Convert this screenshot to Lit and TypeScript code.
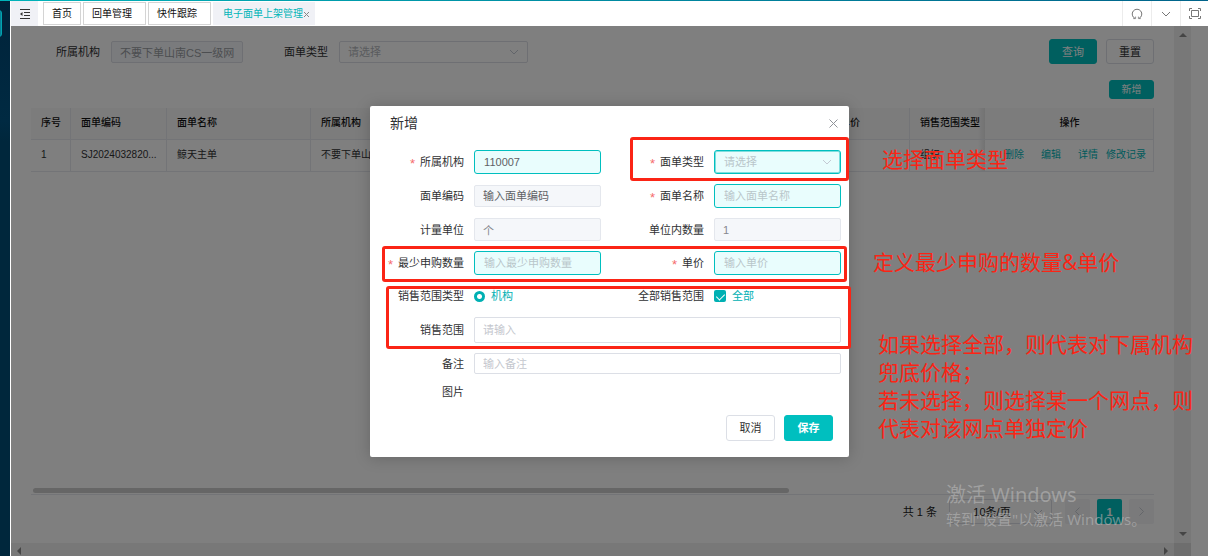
import { LitElement, html, css, svg, nothing } from "lit";
import { customElement } from "lit/decorators.js";
import { classMap } from "lit/directives/class-map.js";

const chevron = svg`<path d="M1 1 L5 5 L9 1" fill="none" stroke="currentColor" stroke-width="1" />`;

const controls = css`
  :host {
    font-family: "Liberation Sans", "Noto Sans CJK SC", sans-serif;
    font-size: 11px;
    line-height: 16px;
    color: #303133;
  }
  * {
    box-sizing: border-box;
  }
  button,
  input,
  select {
    font: inherit;
    color: inherit;
    margin: 0;
  }
  .field,
  .picker select {
    width: 100%;
    height: 22px;
    padding: 0 8px;
    border: 1px solid #dcdfe6;
    border-radius: 2px;
    background: #fff;
    color: #606266;
    outline: none;
  }
  .field::placeholder {
    color: #c4c7ce;
    opacity: 1;
  }
  .picker {
    position: relative;
    display: block;
  }
  .picker select {
    appearance: none;
    color: #b4b7bc;
    opacity: 1;
  }
  .picker svg {
    position: absolute;
    right: 9px;
    top: 50%;
    margin-top: -3px;
    color: #c4cad4;
    pointer-events: none;
  }
  .btn {
    width: 48px;
    height: 25px;
    padding: 0;
    border: 1px solid #dcdfe6;
    border-radius: 3px;
    background: #fff;
  }
  .btn.primary {
    border-color: #00bfbf;
    background: #00bfbf;
    color: #fff;
  }
`;

@customElement("tab-strip")
class TabStrip extends LitElement {
  static styles = [
    controls,
    css`
      :host {
        display: flex;
        height: 25px;
        background: #fff;
        font-size: 10px;
      }
      .cell {
        display: flex;
        align-items: center;
        justify-content: center;
        width: 29px;
        padding: 0;
        border: 0;
        border-left: 1px solid #ececec;
        background: #fff;
        color: #777;
      }
      .cell:last-child {
        width: 28px;
      }
      .cell.fold {
        width: 27px;
        border: 0;
        background: #f0f1f6;
        color: #333;
      }
      .tabs {
        display: flex;
        flex: 1;
        gap: 2px;
        padding: 1px 5px 1px;
      }
      .tab {
        display: flex;
        align-items: center;
        padding: 1px 8px 0;
        border: 1px solid #d4d4d4;
        color: #111;
        text-decoration: none;
      }
      .tab.wide {
        padding-right: 13px;
      }
      .tab.active {
        gap: 1px;
        padding: 1px 5px 0 9px;
        border-color: #f0f1f6;
        background: #f0f1f6;
        color: #00b5b8;
      }
      .tab svg {
        color: #888;
      }
    `,
  ];

  render() {
    return html`
      <button class="cell fold" aria-label="menu">
        <svg width="12" height="10" viewBox="0 0 12 10" fill="none" stroke="currentColor">
          <path d="M1 .5H11M5 3.5H11M5 6.5H11M1 9.5H11" />
          <path d="M3.5 3 L1 5 L3.5 7Z" fill="currentColor" stroke="none" />
        </svg>
      </button>
      <nav class="tabs">
        <a class="tab" href="#home">首页</a>
        <a class="tab wide" href="#receipt">回单管理</a>
        <a class="tab wide" href="#track">快件跟踪</a>
        <a class="tab active" href="#shelf"
          >电子面单上架管理
          <svg width="5" height="5" viewBox="0 0 5 5" stroke="currentColor"><path d="M0 0L5 5M5 0L0 5" /></svg>
        </a>
      </nav>
      <button class="cell" aria-label="refresh">
        <svg width="12" height="12" viewBox="0 0 12 12" fill="none" stroke="currentColor">
          <path d="M4 10.4A4.8 4.8 0 1 1 8 10.4" />
          <path d="M2.2 10.6H4.6V8.6M9.8 10.6H7.4V8.6" stroke-width=".8" />
        </svg>
      </button>
      <button class="cell" aria-label="more">
        <svg width="10" height="6" viewBox="0 0 10 6">${chevron}</svg>
      </button>
      <button class="cell" aria-label="fullscreen">
        <svg width="12" height="11" viewBox="0 0 12 11" fill="none" stroke="currentColor">
          <path d="M2.5 2.5H9.5V8.5H2.5Z" />
          <path d="M.5 3V.5H3M9 .5H11.5V3M11.5 8V10.5H9M3 10.5H.5V8" />
        </svg>
      </button>
    `;
  }
}

@customElement("shelf-page")
class ShelfPage extends LitElement {
  static styles = [
    controls,
    css`
      :host {
        display: grid;
        grid-template-columns: 1fr 17px 17px;
        grid-template-rows: 1fr 13px;
        background: #fff;
      }
      .page {
        display: flex;
        flex-direction: column;
        min-width: 0;
        padding: 13px 20px 19px;
      }
      .query {
        display: flex;
        align-items: center;
        gap: 11px;
        padding-left: 25px;
      }
      .query .org {
        width: 132px;
        background: #f5f7fa;
        color: #999ca2;
      }
      .query .gap {
        margin-left: 30px;
      }
      .query .picker {
        width: 189px;
      }
      .actions {
        display: flex;
        gap: 9px;
        margin-left: auto;
      }
      .toolbar {
        display: flex;
        justify-content: flex-end;
        padding: 16px 0 9px;
      }
      .toolbar .btn {
        width: 45px;
        height: 19px;
        font-size: 10px;
        line-height: 16px;
      }
      table {
        width: 100%;
        table-layout: fixed;
        border-collapse: separate;
        border-spacing: 0;
        font-size: 10px;
      }
      th,
      td {
        height: 32px;
        padding: 0 9px 2px 10px;
        border-right: 1px solid #e6e8ee;
        border-bottom: 1px solid #e6e8ee;
        text-align: left;
        white-space: nowrap;
        overflow: hidden;
      }
      th {
        background: #f8f8f9;
        font-weight: 500;
        color: #111;
      }
      .c-no {
        width: 40px;
      }
      .c-code {
        width: 96px;
      }
      .c-name {
        width: 144px;
      }
      .c-price {
        width: 80px;
      }
      .c-range {
        width: 75px;
      }
      .c-ops {
        width: 169px;
      }
      th.before-fixed,
      td.before-fixed {
        padding-right: 4px;
        border-right: 0;
        background-image: linear-gradient(to left, #e6e6e6, transparent 7px);
      }
      th.ops {
        text-align: center;
      }
      .links {
        display: flex;
        justify-content: flex-end;
        gap: 17px;
        margin-right: -2px;
      }
      .links a {
        color: #00b5b8;
        text-decoration: none;
      }
      .links a:last-child {
        margin-left: -9px;
      }
      .hscroll {
        margin-top: auto;
        padding: 0 2px 1px;
      }
      .thumb {
        width: 67.6%;
        height: 5px;
        border-radius: 3px;
        background: #ccc;
      }
      .pager {
        display: flex;
        align-items: center;
        gap: 7px;
        padding-top: 4px;
        border-top: 1px solid #e6e8ee;
        justify-content: flex-end;
        color: #222;
      }
      .pager .picker {
        width: 103px;
        margin: 0 6px 0 5px;
      }
      .pager select {
        height: 25px;
        color: #222;
        text-align: center;
        text-align-last: center;
        padding-right: 25px;
      }
      .num {
        display: flex;
        align-items: center;
        justify-content: center;
        width: 25px;
        height: 25px;
        padding: 0;
        border: 0;
        border-radius: 2px;
        background: #f4f4f7;
        color: #c8ccd4;
      }
      .num.on {
        background: #00bfbf;
        color: #fff;
        font-weight: 700;
      }
      .vbar,
      .hbar {
        display: flex;
        justify-content: space-between;
        align-items: center;
        background: #f0f0f0;
        color: #8a8a8a;
      }
      .vbar {
        flex-direction: column;
        padding: 7px 0;
      }
      .hbar {
        padding: 3px 6px 0;
      }
      .corner {
        background: #dcdcdc;
      }
    `,
  ];

  render() {
    return html`
      <div class="page">
        <form class="query">
          <label for="org">所属机构</label>
          <input id="org" class="field org" readonly .value=${"不要下单山南CS一级网"} />
          <label class="gap" for="kind">面单类型</label>
          <span class="picker">
            <select id="kind">
              <option>请选择</option>
            </select>
            <svg width="10" height="6" viewBox="0 0 10 6">${chevron}</svg>
          </span>
          <div class="actions">
            <button type="button" class="btn primary">查询</button>
            <button type="button" class="btn">重置</button>
          </div>
        </form>
        <div class="toolbar"><button class="btn primary">新增</button></div>
        <table>
          <colgroup>
            <col class="c-no" />
            <col class="c-code" />
            <col class="c-name" />
            <col />
            <col class="c-price" />
            <col class="c-range" />
            <col class="c-ops" />
          </colgroup>
          <thead>
            <tr>
              <th>序号</th>
              <th>面单编码</th>
              <th>面单名称</th>
              <th>所属机构</th>
              <th>单价</th>
              <th class="before-fixed">销售范围类型</th>
              <th class="ops">操作</th>
            </tr>
          </thead>
          <tbody>
            <tr>
              <td>1</td>
              <td>SJ2024032820...</td>
              <td>鲸天主单</td>
              <td>不要下单山南</td>
              <td></td>
              <td class="before-fixed">组织</td>
              <td>
                <div class="links">
                  <a href="#delete">删除</a><a href="#edit">编辑</a><a href="#detail">详情</a
                  ><a href="#log">修改记录</a>
                </div>
              </td>
            </tr>
          </tbody>
        </table>
        <div class="hscroll"><div class="thumb"></div></div>
        <div class="pager">
          <span>共 1 条</span>
          <span class="picker">
            <select aria-label="每页条数">
              <option>10条/页</option>
            </select>
            <svg width="10" height="6" viewBox="0 0 10 6">${chevron}</svg>
          </span>
          <button class="num" aria-label="上一页">
            <svg width="5" height="9" viewBox="0 0 5 9" fill="none" stroke="currentColor"><path d="M4.5 .5L.5 4.5L4.5 8.5" /></svg>
          </button>
          <button class="num on">1</button>
          <button class="num" aria-label="下一页">
            <svg width="5" height="9" viewBox="0 0 5 9" fill="none" stroke="currentColor"><path d="M.5 .5L4.5 4.5L.5 8.5" /></svg>
          </button>
        </div>
      </div>
      <div class="vbar">
        <svg width="8" height="4" viewBox="0 0 8 4" fill="currentColor"><path d="M0 4L4 0L8 4Z" /></svg>
        <svg width="8" height="4" viewBox="0 0 8 4" fill="currentColor"><path d="M0 0L4 4L8 0Z" /></svg>
      </div>
      <div></div>
      <div class="hbar">
        <svg width="4" height="8" viewBox="0 0 4 8" fill="currentColor"><path d="M4 0L0 4L4 8Z" /></svg>
        <svg width="4" height="8" viewBox="0 0 4 8" fill="currentColor"><path d="M0 0L4 4L0 8Z" /></svg>
      </div>
      <div class="corner"></div>
    `;
  }
}

interface Field {
  id: string;
  label: string;
  value?: string;
  hint?: string;
  required?: boolean;
  readonly?: boolean;
  select?: boolean;
}

@customElement("create-dialog")
class CreateDialog extends LitElement {
  static styles = [
    controls,
    css`
      :host {
        display: block;
        border-radius: 2px;
        background: #fff;
        box-shadow: 0 1px 16px rgba(0, 0, 0, 0.2);
      }
      header {
        display: flex;
        align-items: center;
        justify-content: space-between;
        padding: 8px 11px 0 20px;
      }
      h2 {
        margin: 0;
        font-size: 14px;
        line-height: 18px;
        font-weight: 400;
      }
      .close {
        display: flex;
        padding: 0;
        border: 0;
        background: none;
        color: #909399;
      }
      form {
        display: grid;
        grid-template-columns: 94px 1fr 93px 1fr;
        gap: 10px;
        align-items: center;
        padding: 18px 8px 0 0;
      }
      .name {
        text-align: right;
        white-space: nowrap;
      }
      .name.required::before {
        content: "*";
        margin-right: 5px;
        color: #f56c6c;
        font-size: 13px;
        line-height: 10px;
        vertical-align: -2px;
      }
      .field.locked {
        background: #f5f7fa;
        border-color: #e4e7ed;
        height: 23px;
        color: #85888e;
      }
      .field.code {
        height: 22px;
      }
      .field.code::placeholder {
        color: #606266;
      }
      .field.needed,
      .picker.needed select {
        height: 24px;
        padding: 0 9px;
        border-color: #00bfbf;
        border-radius: 3px;
        background: #e9fdfd;
      }
      .picker.needed select {
        box-shadow: inset 0 0 0 1px #7fdede;
      }
      .field.needed::placeholder,
      .picker.needed select {
        color: #b9c6ca;
      }
      .span {
        grid-column: span 3;
      }
      .field.scope {
        height: 26px;
      }
      .field.note {
        height: 21px;
      }
      .choice {
        display: flex;
        align-items: center;
        gap: 6px;
        height: 22px;
        color: #00b0b3;
      }
      .choice input {
        appearance: none;
        position: relative;
        width: 12px;
        height: 12px;
        border-radius: 2px;
        background: #00b0b3;
      }
      .choice input[type="radio"] {
        width: 11px;
        height: 11px;
        border-radius: 50%;
        background: radial-gradient(circle, #fff 2px, #00b0b3 3px);
      }
      .choice input[type="checkbox"]::after {
        content: "";
        position: absolute;
        left: 4px;
        top: 2px;
        width: 4px;
        height: 7px;
        border: solid #fff;
        border-width: 0 1px 1px 0;
        transform: rotate(45deg);
      }
      footer {
        display: flex;
        justify-content: flex-end;
        gap: 9px;
        padding: 15px 16px 16px;
      }
      footer .btn {
        width: 49px;
        height: 26px;
      }
      footer .primary {
        font-weight: 700;
      }
    `,
  ];

  private fields: Field[] = [
    { id: "f-org", label: "所属机构", value: "110007", required: true },
    { id: "f-kind", label: "面单类型", hint: "请选择", required: true, select: true },
    { id: "f-code", label: "面单编码", hint: "输入面单编码", readonly: true },
    { id: "f-name", label: "面单名称", hint: "输入面单名称", required: true },
    { id: "f-unit", label: "计量单位", value: "个", readonly: true },
    { id: "f-count", label: "单位内数量", value: "1", readonly: true },
    { id: "f-min", label: "最少申购数量", hint: "输入最少申购数量", required: true },
    { id: "f-price", label: "单价", hint: "输入单价", required: true },
  ];

  private control(f: Field) {
    if (f.select) {
      return html`<span class="picker needed">
        <select id=${f.id}>
          <option>${f.hint}</option>
        </select>
        <svg width="10" height="6" viewBox="0 0 10 6">${chevron}</svg>
      </span>`;
    }
    const look = { field: true, needed: !!f.required, locked: !!f.readonly, code: !!f.readonly && !!f.hint };
    return html`<input
      id=${f.id}
      class=${classMap(look)}
      ?readonly=${f.readonly}
      .value=${f.value ?? ""}
      placeholder=${f.hint ?? nothing}
    />`;
  }

  render() {
    return html`
      <header>
        <h2>新增</h2>
        <button class="close" aria-label="关闭">
          <svg width="9" height="9" viewBox="0 0 9 9" stroke="currentColor"><path d="M.5 .5L8.5 8.5M8.5 .5L.5 8.5" /></svg>
        </button>
      </header>
      <form>
        ${this.fields.map(
          (f) => html`<label class=${classMap({ name: true, required: !!f.required })} for=${f.id}>${f.label}</label>
            ${this.control(f)}`,
        )}
        <span class="name">销售范围类型</span>
        <label class="choice"><input type="radio" name="scope-kind" checked />机构</label>
        <span class="name">全部销售范围</span>
        <label class="choice"><input type="checkbox" checked />全部</label>
        <label class="name" for="f-scope">销售范围</label>
        <input id="f-scope" class="field span scope" placeholder="请输入" />
        <label class="name" for="f-note">备注</label>
        <input id="f-note" class="field span note" placeholder="输入备注" />
        <span class="name">图片</span>
      </form>
      <footer>
        <button class="btn">取消</button>
        <button class="btn primary">保存</button>
      </footer>
    `;
  }
}

@customElement("app-root")
class AppRoot extends LitElement {
  static styles = css`
    :host {
      display: flex;
      flex-direction: column;
      position: relative;
      height: 100vh;
      overflow: hidden;
      font-family: "Liberation Sans", "Noto Sans CJK SC", sans-serif;
    }
    .accent {
      height: 1px;
      background: linear-gradient(to right, #00b3b9, #00638a);
    }
    .shell {
      display: grid;
      grid-template-columns: 10px 1fr;
      flex: 1;
      min-height: 0;
    }
    .side {
      position: relative;
      overflow: hidden;
      background: linear-gradient(#00233a, #002a42 120px, #00273c 140px);
    }
    .side::before {
      content: "";
      position: absolute;
      left: -10px;
      top: 9px;
      width: 12px;
      height: 27px;
      border: 1px solid #00a5b0;
      border-radius: 3px;
      background: #087f95;
      box-sizing: border-box;
    }
    .main {
      display: flex;
      flex-direction: column;
      min-width: 0;
      border-left: 1px solid #fff;
    }
    .stage {
      display: grid;
      position: relative;
      flex: 1;
      min-height: 0;
    }
    .mask {
      position: absolute;
      inset: 0;
      background: rgba(0, 0, 0, 0.5);
    }
    create-dialog {
      width: 40%;
      margin: 80px auto 0;
    }
    .frame {
      position: absolute;
      box-sizing: border-box;
      border: 3px solid #fb2415;
      border-radius: 3px;
    }
    .frame.kind {
      left: 630px;
      top: 137px;
      width: 219px;
      height: 44px;
    }
    .frame.price {
      left: 382px;
      top: 246px;
      width: 465px;
      height: 36px;
    }
    .frame.scope {
      left: 386px;
      top: 286px;
      width: 465px;
      height: 63px;
    }
    .memo {
      position: absolute;
      margin: 0;
      color: #fb2415;
      font-family: "Open Sans", "Noto Sans CJK SC", sans-serif;
      font-size: 21px;
      line-height: 28px;
      white-space: nowrap;
    }
    .memo.kind {
      left: 882px;
      top: 145px;
    }
    .memo.price {
      left: 873px;
      top: 248px;
    }
    .memo.scope {
      left: 878px;
      top: 330px;
    }
    .watermark {
      position: absolute;
      left: 946px;
      top: 482px;
      color: rgba(190, 190, 190, 0.55);
      font-family: "Noto Sans", "Noto Sans CJK SC", sans-serif;
      font-size: 20px;
      line-height: 26px;
      white-space: nowrap;
      pointer-events: none;
    }
    .watermark small {
      display: block;
      font-size: 15px;
      line-height: 22px;
    }
  `;

  render() {
    return html`
      <div class="accent"></div>
      <div class="shell">
        <aside class="side"></aside>
        <main class="main">
          <tab-strip></tab-strip>
          <div class="stage">
            <shelf-page></shelf-page>
            <div class="mask"><create-dialog></create-dialog></div>
          </div>
        </main>
      </div>
      <div class="frame kind"></div>
      <div class="frame price"></div>
      <div class="frame scope"></div>
      <p class="memo kind">选择面单类型</p>
      <p class="memo price">定义最少申购的数量&amp;单价</p>
      <p class="memo scope">
        如果选择全部，则代表对下属机构<br />兜底价格；<br />若未选择，则选择某一个网点，则<br />代表对该网点单独定价
      </p>
      <div class="watermark">激活 Windows<small>转到"设置"以激活 Windows。</small></div>
    `;
  }
}
